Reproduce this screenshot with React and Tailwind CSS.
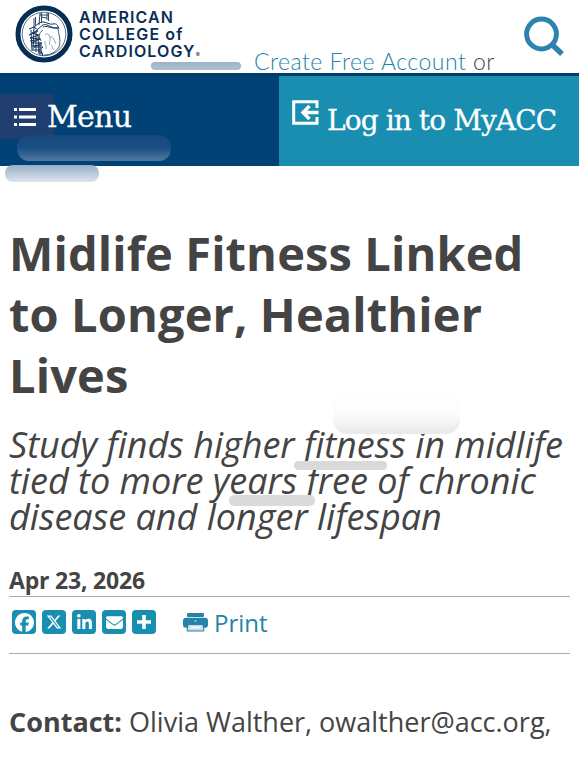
import React from 'react';
import { FaFacebook, FaXTwitter, FaLinkedinIn, FaEnvelope } from 'react-icons/fa6';

const SealLogo = () => (
  <svg className="mt-[5px] h-[58px] w-[58px] shrink-0" viewBox="0 0 58 58" fill="none" stroke="#17365c">
    <circle cx="29" cy="29" r="26" stroke="#062d54" strokeWidth="5" fill="#fff" />
    <circle cx="29" cy="29" r="21.8" strokeWidth="0.7" />
    {/* great vessels */}
    <path d="M19 13v9M20.5 12v9M25 8l-1 12M26.5 8v10M32 8v7M33.5 8v8M25 10h8M26 12l6 1" strokeWidth="0.9" />
    <path d="M18 23c4-3 6-6 10-6s6 3 10 2 5 2 6 5M23 24c3-2 5-6 9-4s6 3 11 3M28 22c4-2 8 2 15 1" strokeWidth="1" />
    {/* shaded left side */}
    <path d="M14 24l5-2 4 3-6 3 7 2-9 3 10 1-9 4 11 0-8 4 9 0-5 4 5 3M16 25l1 21M19 22l-1 24M21 27v20M23 31l1 18M25 37v13" strokeWidth="1" />
    <path d="M14 30l9-4M15 36l11-2M16 41l11-1M19 45l8 0M26 46l2 5" strokeWidth="1.2" />
    {/* heart outline and coronary branches */}
    <path d="M28 25c-5 3-4 8-2 11M43 24c1 6 3 12 1 18-4 6-9 8-15 8" strokeWidth="0.8" />
    <path d="M30 30c3-3 4 0 5 3s-2 4 0 7M35 32c4-1 4 4 6 7M30 36c-1 3 2 4 1 8M36 40c2 1 1 4 3 5" strokeWidth="0.6" opacity="0.75" />
  </svg>
);

const SearchIcon = () => (
  <svg className="h-[40px] w-[41px]" viewBox="0 0 41 40" fill="none" stroke="#2b83ae">
    <circle cx="17.5" cy="18" r="14.9" strokeWidth="5" />
    <path d="M28 28.5L38 38" strokeWidth="5.5" />
  </svg>
);

const MenuIcon = () => (
  <svg className="h-[20px] w-[22px] shrink-0" viewBox="0 0 22 20" fill="#fff">
    <path d="M0 1h3v3H0zM5 1h17v3H5zM0 8.5h3v3H0zM5 8.5h17v3H5zM0 16h3v3H0zM5 16h17v3H5z" />
  </svg>
);

const LoginIcon = () => (
  <svg className="h-[25px] w-[27px]" viewBox="0 0 27 25" fill="none" stroke="#fff" strokeWidth="3">
    <path d="M25 8V1.7H1.7v21.6H25V17" />
    <path d="M26.5 12.5H11M17.5 6l-6.5 6.5 6.5 6.5" strokeWidth="3.4" />
  </svg>
);

const PlusIcon = () => (
  <svg className="h-[14px] w-[14px]" viewBox="0 0 14 14" fill="#fff">
    <path d="M5.2 0h3.6v5.2H14v3.6H8.8V14H5.2V8.8H0V5.2h5.2z" />
  </svg>
);

const PrintIcon = () => (
  <svg className="h-[19px] w-[25px]" viewBox="0 0 25 19">
    <rect x="4" width="17" height="4" rx="1" fill="#2583aa" />
    <rect y="4.8" width="25" height="10" rx="3" fill="#2583aa" />
    <path d="M5 11.5h15l1 6.5H4z" fill="#c9e0ea" stroke="#2583aa" />
    <path d="M7.5 14.5h10" stroke="#fff" strokeWidth="1.5" />
    <circle cx="12.5" cy="8" r="1" fill="#a8cfdf" />
  </svg>
);

const shareLinks = [
  { name: 'Facebook', icon: <FaFacebook size={19} /> },
  { name: 'X', icon: <FaXTwitter size={16} /> },
  { name: 'LinkedIn', icon: <FaLinkedinIn size={17} /> },
  { name: 'Email', icon: <FaEnvelope size={17} /> },
  { name: 'Share', icon: <PlusIcon /> },
];

const Header = () => (
  <header>
    <div className="flex h-[73px] items-start pl-[15px] pr-[14px]">
      <SealLogo />
      <div className="ml-[6px] mt-[9px] w-[132px] whitespace-nowrap font-['Inter',sans-serif] text-[16px] font-semibold leading-[17px] tracking-[1.1px] text-[#0b2e55]">
        <div>AMERICAN</div>
        <div>COLLEGE of</div>
        <div>CARDIOLOGY<span className="text-[6px] font-normal tracking-normal">®</span></div>
      </div>
      <div className="ml-[43px] mt-[46px] whitespace-nowrap font-['Lato',sans-serif] text-[23px] font-light leading-[30px] tracking-[0.5px] text-[#444]">
        <a className="text-[#2583aa]">Create Free Account</a> or
      </div>
      <div className="ml-auto mt-[16px]">
        <SearchIcon />
      </div>
    </div>
    <nav className="flex h-[93px] border-t-[3px] border-[#003d6b] font-['DejaVu_Serif',serif] text-white [-webkit-text-stroke:0.3px_white]">
      <div className="w-[279px] bg-[#004276]">
        <div className="mt-[18px] flex h-[45px] w-[54px] items-center bg-[#203e70] pl-[14px]">
          <MenuIcon />
          <span className="ml-[11px] text-[30px] leading-[45px] tracking-[-0.7px]">Menu</span>
        </div>
      </div>
      <div className="flex flex-1 whitespace-nowrap bg-[#198eb0] pl-[13px]">
        <div className="mt-[24px]"><LoginIcon /></div>
        <span className="ml-[8px] mt-[25px] text-[28px] leading-[40px] tracking-[-0.9px]">Log in to MyACC</span>
      </div>
    </nav>
  </header>
);

// Soft rounded strokes lying over the page
const Smudges = () => (
  <div className="pointer-events-none">
    <div className="absolute left-[151px] top-[62px] h-[8px] w-[90px] rounded-full bg-gradient-to-b from-[#9bb3ca] to-[#adc1d4]" />
    <div className="absolute left-[17px] top-[135px] h-[26px] w-[154px] rounded-[12px] bg-gradient-to-b from-[#17487c] via-[#184f85] to-[#51799f]" />
    <div className="absolute left-[5px] top-[165px] h-[17px] w-[94px] rounded-[8px] bg-gradient-to-b from-[#97afc7] to-[#dce5ed]" />
    <div className="absolute left-[333px] top-[392px] h-[42px] w-[127px] rounded-b-[14px] bg-gradient-to-b from-white via-[#fcfcfc] to-[#e9e9e9]" />
    <div className="absolute left-[294px] top-[461px] h-[9px] w-[93px] rounded-full bg-[#d9d9d9]" />
    <div className="absolute left-[229px] top-[495px] h-[11px] w-[86px] rounded-full bg-[#dadada]" />
  </div>
);

export default function App() {
  return (
    <div className="relative h-[757px] w-[579px] overflow-hidden bg-white font-['Open_Sans',sans-serif] text-[#444]">
      <Header />
      <main className="px-[9px] pt-[57px]">
        <h1 className="whitespace-nowrap text-[47px] font-bold leading-[61px] tracking-[0.12px]">
          Midlife Fitness Linked<br />to Longer, Healthier<br />Lives
        </h1>
        <h2 className="mt-[21px] whitespace-nowrap text-[36px] italic leading-[36px]">
          Study finds higher fitness in midlife<br />tied to more years free of chronic<br />disease and longer lifespan
        </h2>
        <div className="mt-[30px] text-[23px] font-bold leading-[31px] tracking-[-0.2px]">Apr 23, 2026</div>
        <div className="flex h-[58px] items-center border-y border-[#aaa] pb-[6px] pl-[3px]">
          <div className="flex gap-[6px]">
            {shareLinks.map(({ name, icon }) => (
              <a key={name} className="flex h-6 w-6 items-center justify-center rounded-[4px] bg-[#198eb0] text-white">
                {icon}
              </a>
            ))}
          </div>
          <div className="ml-[27px] flex items-center text-[24px] text-[#2583aa]">
            <PrintIcon />
            <span className="ml-[6px] pt-[2px]">Print</span>
          </div>
        </div>
        <p className="mt-[50px] whitespace-nowrap text-[27px] leading-[36px]">
          <strong>Contact:</strong> Olivia Walther, owalther@acc.org,
        </p>
      </main>
      <Smudges />
    </div>
  );
}
